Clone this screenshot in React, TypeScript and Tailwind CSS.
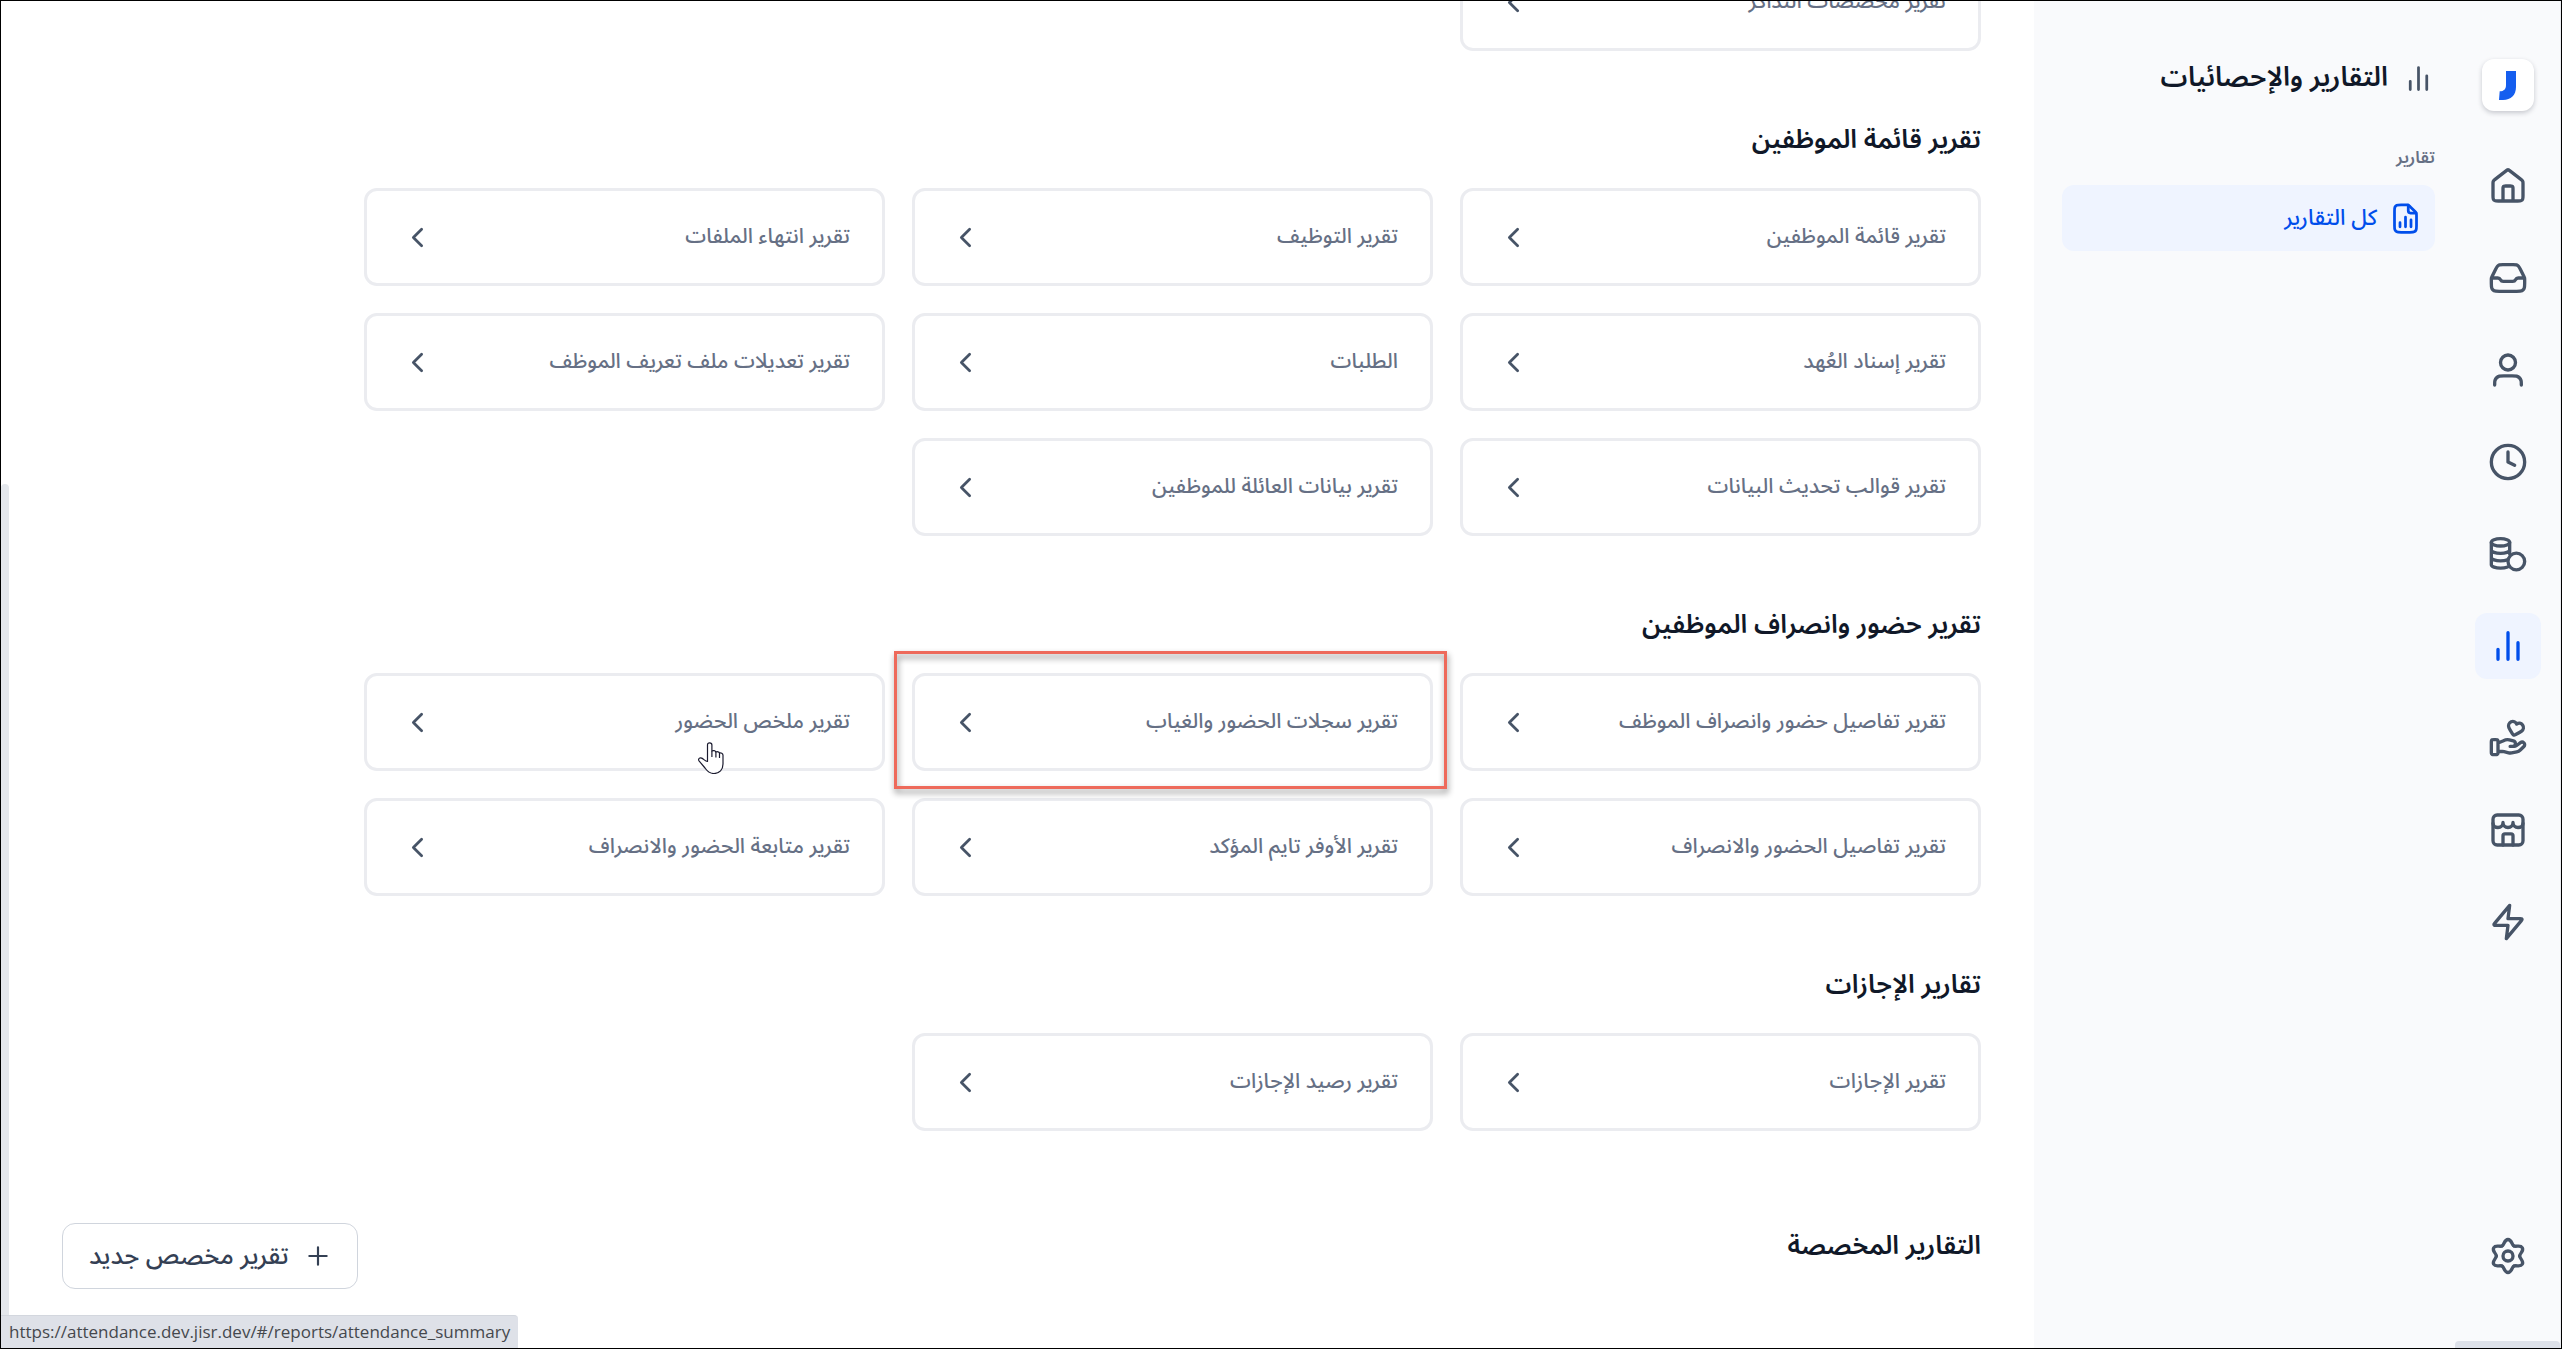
import type { ReactNode } from 'react';

interface IReport {
  title: string;
  href: string;
  highlighted?: boolean;
  hovered?: boolean;
}

interface IReportSection {
  title: string;
  reports: IReport[];
}

const sections: IReportSection[] = [
  {
    title: 'تقرير قائمة الموظفين',
    reports: [
      { title: 'تقرير قائمة الموظفين', href: '#/reports/employees' },
      { title: 'تقرير التوظيف', href: '#/reports/hiring' },
      { title: 'تقرير انتهاء الملفات', href: '#/reports/files_expiry' },
      { title: 'تقرير إسناد العُهد', href: '#/reports/assets' },
      { title: 'الطلبات', href: '#/reports/requests' },
      { title: 'تقرير تعديلات ملف تعريف الموظف', href: '#/reports/profile_changes' },
      { title: 'تقرير قوالب تحديث البيانات', href: '#/reports/data_templates' },
      { title: 'تقرير بيانات العائلة للموظفين', href: '#/reports/family' },
    ],
  },
  {
    title: 'تقرير حضور وانصراف الموظفين',
    reports: [
      { title: 'تقرير تفاصيل حضور وانصراف الموظف', href: '#/reports/employee_attendance' },
      { title: 'تقرير سجلات الحضور والغياب', href: '#/reports/attendance_logs', highlighted: true },
      { title: 'تقرير ملخص الحضور', href: '#/reports/attendance_summary', hovered: true },
      { title: 'تقرير تفاصيل الحضور والانصراف', href: '#/reports/attendance_details' },
      { title: 'تقرير الأوفر تايم المؤكد', href: '#/reports/overtime' },
      { title: 'تقرير متابعة الحضور والانصراف', href: '#/reports/attendance_tracking' },
    ],
  },
  {
    title: 'تقارير الإجازات',
    reports: [
      { title: 'تقرير الإجازات', href: '#/reports/leaves' },
      { title: 'تقرير رصيد الإجازات', href: '#/reports/leave_balance' },
    ],
  },
];

function Icon({ className, children }: { className: string; children: ReactNode }) {
  return (
    <svg
      viewBox="0 0 24 24"
      fill="none"
      stroke="currentColor"
      strokeWidth="2"
      strokeLinecap="round"
      strokeLinejoin="round"
      aria-hidden="true"
      className={`shrink-0 ${className}`}
    >
      {children}
    </svg>
  );
}

const chartPath = <path d="M18 20V10M12 20V4M6 20V14" />;

const navItems = [
  {
    label: 'الرئيسية',
    icon: (
      <path d="M9 21V13.6C9 13.0399 9 12.7599 9.10899 12.546C9.20487 12.3578 9.35785 12.2049 9.54601 12.109C9.75992 12 10.0399 12 10.6 12H13.4C13.9601 12 14.2401 12 14.454 12.109C14.6422 12.2049 14.7951 12.3578 14.891 12.546C15 12.7599 15 13.0399 15 13.6V21M11.0177 2.764L4.23539 8.03912C3.78202 8.39175 3.55534 8.56806 3.39203 8.78886C3.24737 8.98444 3.1396 9.20478 3.07403 9.43905C3 9.70352 3 9.9907 3 10.5651V17.8C3 18.9201 3 19.4801 3.21799 19.908C3.40973 20.2843 3.71569 20.5903 4.09202 20.782C4.51984 21 5.07989 21 6.2 21H17.8C18.9201 21 19.4802 21 19.908 20.782C20.2843 20.5903 20.5903 20.2843 20.782 19.908C21 19.4801 21 18.9201 21 17.8V10.5651C21 9.9907 21 9.70352 20.926 9.43905C20.8604 9.20478 20.7526 8.98444 20.608 8.78886C20.4447 8.56806 20.218 8.39175 19.7646 8.03913L12.9823 2.764C12.631 2.49075 12.4553 2.35412 12.2613 2.3016C12.0902 2.25526 11.9098 2.25526 11.7387 2.3016C11.5447 2.35412 11.369 2.49075 11.0177 2.764Z" />
    ),
  },
  {
    label: 'الوارد',
    icon: (
      <path d="M2.5 12H5.88197C6.56717 12 7.19357 12.3871 7.5 13C7.80643 13.6129 8.43283 14 9.11803 14H14.882C15.5672 14 16.1936 13.6129 16.5 13C16.8064 12.3871 17.4328 12 18.118 12H21.5M8.96656 4H15.0334C16.1103 4 16.6487 4 17.1241 4.16396C17.5445 4.30896 17.9274 4.5456 18.2451 4.85675C18.6043 5.2086 18.8451 5.6902 19.3267 6.65337L21.4932 10.9865C21.6822 11.3645 21.7767 11.5535 21.8434 11.7515C21.9026 11.9275 21.9453 12.1085 21.971 12.2923C22 12.4992 22 12.7105 22 13.1331V15.2C22 16.8802 22 17.7202 21.673 18.362C21.3854 18.9265 20.9265 19.3854 20.362 19.673C19.7202 20 18.8802 20 17.2 20H6.8C5.11984 20 4.27976 20 3.63803 19.673C3.07354 19.3854 2.6146 18.9265 2.32698 18.362C2 17.7202 2 16.8802 2 15.2V13.1331C2 12.7105 2 12.4992 2.02897 12.2923C2.05471 12.1085 2.09744 11.9275 2.15662 11.7515C2.22326 11.5535 2.31776 11.3645 2.50675 10.9865L4.67331 6.65337C5.1549 5.69018 5.3957 5.2086 5.75495 4.85675C6.07263 4.5456 6.45551 4.30896 6.87589 4.16396C7.35125 4 7.88969 4 8.96656 4Z" />
    ),
  },
  {
    label: 'الموظفون',
    icon: (
      <path d="M20 21C20 19.6044 20 18.9067 19.8278 18.3389C19.44 17.0605 18.4395 16.06 17.1611 15.6722C16.5933 15.5 15.8956 15.5 14.5 15.5H9.5C8.10444 15.5 7.40665 15.5 6.83886 15.6722C5.56045 16.06 4.56004 17.0605 4.17224 18.3389C4 18.9067 4 19.6044 4 21M16.5 7.5C16.5 9.98528 14.4853 12 12 12C9.51472 12 7.5 9.98528 7.5 7.5C7.5 5.01472 9.51472 3 12 3C14.4853 3 16.5 5.01472 16.5 7.5Z" />
    ),
  },
  {
    label: 'الحضور',
    icon: (
      <>
        <circle cx="12" cy="12" r="10" />
        <path d="M12 6V12L16 14" />
      </>
    ),
  },
  {
    label: 'الرواتب',
    icon: (
      <>
        <ellipse cx="7.5" cy="5" rx="5.5" ry="2.2" />
        <path d="M13 5v7M2 5v13.5c0 1.1 2.5 2 5.5 2 1.7 0 3.2-.3 4.3-.7M2 9.5c0 1.2 2.5 2.1 5.5 2.1s5.5-.9 5.5-2.1M2 14c0 1.2 2.5 2.1 5.5 2.1 1.6 0 3-.2 4.1-.6" />
        <circle cx="17" cy="16.5" r="5" />
      </>
    ),
  },
  { label: 'التقارير', icon: chartPath, active: true },
  {
    label: 'المزايا',
    icon: (
      <path d="M6 20.0872H8.61029C8.95063 20.0872 9.28888 20.1277 9.61881 20.2086L12.3769 20.8789C12.9753 21.0247 13.5988 21.0389 14.2035 20.9214L17.253 20.3281C18.0585 20.1712 18.7996 19.7854 19.3803 19.2205L21.5379 17.1217C22.154 16.5234 22.154 15.5524 21.5379 14.9531C20.9832 14.4134 20.1047 14.3527 19.4771 14.8103L16.9626 16.6449C16.6025 16.9081 16.1643 17.0498 15.7137 17.0498H13.2855H14.8311C15.7022 17.0498 16.4079 16.3633 16.4079 15.5159V15.2091C16.4079 14.5055 15.9156 13.892 15.2141 13.7219L12.8286 13.1417C12.4404 13.0476 12.0428 13 11.6431 13C10.6783 13 8.93189 13.7988 8.93189 13.7988L6 15.0249M2 14.6L2 20.4C2 20.9601 2 21.2401 2.10899 21.454C2.20487 21.6422 2.35785 21.7951 2.54601 21.891C2.75992 22 3.03995 22 3.6 22H4.4C4.96005 22 5.24008 22 5.45399 21.891C5.64215 21.7951 5.79513 21.6422 5.89101 21.454C6 21.2401 6 20.9601 6 20.4V14.6C6 14.0399 6 13.7599 5.89101 13.546C5.79513 13.3578 5.64215 13.2049 5.45399 13.109C5.24008 13 4.96005 13 4.4 13L3.6 13C3.03995 13 2.75992 13 2.54601 13.109C2.35785 13.2049 2.20487 13.3578 2.10899 13.546C2 13.7599 2 14.0399 2 14.6ZM17.1914 3.59946C16.5946 2.34333 15.2186 1.67784 13.8804 2.31636C12.5423 2.95488 11.9722 4.47361 12.5325 5.81047C12.8787 6.63669 13.8707 8.24103 14.5878 9.3564C14.8528 9.76852 14.9853 9.97457 15.1788 10.0951C15.3448 10.1985 15.5527 10.2542 15.7481 10.2476C15.976 10.24 16.1938 10.1279 16.6295 9.90364C17.8086 9.29665 19.4626 8.40036 20.1734 7.85639C21.3235 6.97622 21.6111 5.37142 20.7496 4.15002C19.8881 2.92862 18.4115 2.80919 17.1914 3.59946Z" />
    ),
  },
  {
    label: 'المتجر',
    icon: (
      <>
        <rect x="3" y="3" width="18" height="18" rx="2.5" />
        <path d="M3 8c0 1.5 1.3 2.5 3 2.5s3-1.3 3-3c0 1.7 1.3 3 3 3s3-1.3 3-3c0 1.7 1.3 3 3 3s3-1 3-2.5M9 21v-5.5c0-.8.4-1.2 1.2-1.2h3.6c.8 0 1.2.4 1.2 1.2V21" />
      </>
    ),
  },
  {
    label: 'الأتمتة',
    icon: (
      <path d="M13 2L4.09344 12.6879C3.74463 13.1064 3.57023 13.3157 3.56756 13.4925C3.56524 13.6461 3.63372 13.7923 3.75324 13.8889C3.89073 14 4.16316 14 4.70802 14H12L11 22L19.9065 11.3121C20.2553 10.8936 20.4297 10.6843 20.4324 10.5075C20.4347 10.3539 20.3663 10.2077 20.2467 10.1111C20.1092 10 19.8368 10 19.292 10H12L13 2Z" />
    ),
  },
];

function NavRail() {
  return (
    <aside className="relative flex w-[106px] shrink-0 flex-col items-center border-r border-[#eaecf0] bg-[#f9fafc] pt-[58px] pb-[59px]">
      <a
        href="#/"
        aria-label="Jisr"
        className="flex size-[52px] items-center justify-center rounded-xl bg-white shadow-[0_2px_5px_rgba(16,24,40,0.22)]"
      >
        <svg viewBox="0 0 17 29" className="h-[29px] w-[17px]" aria-hidden="true">
          <path fill="#155eef" d="M7 0H17V16C17 24 12 29 4 29H0L.7 20.3C5 20.3 7 18 7 14Z" />
        </svg>
      </a>
      <nav className="mt-[42px] flex flex-col gap-[26px]">
        {navItems.map((item) => (
          <a
            key={item.label}
            href="#/"
            aria-label={item.label}
            className={`flex size-[66px] items-center justify-center rounded-xl ${
              item.active ? 'bg-[#eff4ff] text-[#004eeb]' : 'text-[#475467]'
            }`}
          >
            <Icon className="size-10">{item.icon}</Icon>
          </a>
        ))}
      </nav>
      <a
        href="#/settings"
        aria-label="الإعدادات"
        className="mt-auto flex size-[66px] items-center justify-center text-[#475467]"
      >
        <Icon className="size-10">
          <circle cx="12" cy="12" r="3" />
          {[0, 60, 120, 180, 240, 300].map((angle) => (
            <path
              key={angle}
              d="M8.5 5.94C9.9 5.13 9.7 2.1 12 2.1S14.1 5.13 15.5 5.94"
              transform={`rotate(${angle} 12 12)`}
            />
          ))}
        </Icon>
      </a>
      <div className="absolute inset-x-0 bottom-0 h-[7px] rounded-t bg-[#dde1e9]" />
    </aside>
  );
}

function SidePanel() {
  return (
    <aside className="w-[421px] shrink-0 bg-[#f9fafc] pt-[53px] pr-5 pl-7">
      <div className="flex h-12 items-center gap-[14px]">
        <Icon className="size-[33px] text-[#475467]">{chartPath}</Icon>
        <h1 className="text-[27px] leading-[48px] font-semibold text-[#101828]">
          التقارير والإحصائيات
        </h1>
      </div>
      <p className="mt-10 text-[17px] leading-8 font-semibold text-[#667085]">تقارير</p>
      <a
        href="#/reports"
        className="mt-[11px] flex h-[66px] items-center gap-3 rounded-xl bg-[#eff4ff] px-[13px] text-[22px] leading-8 font-medium text-[#004eeb]"
      >
        <Icon className="size-[33px]">
          <path d="M20 9.99V17.2c0 1.68 0 2.52-.33 3.16a3 3 0 0 1-1.31 1.31C17.72 22 16.88 22 15.2 22H8.8c-1.68 0-2.52 0-3.16-.33a3 3 0 0 1-1.31-1.31C4 19.72 4 18.88 4 17.2V6.8c0-1.68 0-2.52.33-3.16a3 3 0 0 1 1.31-1.31C6.28 2 7.12 2 8.8 2h3.21c.73 0 1.1 0 1.45.08a3 3 0 0 1 .86.36c.3.19.56.45 1.08.96l3.2 3.2c.52.52.78.78.96 1.08a3 3 0 0 1 .36.86c.08.35.08.72.08 1.45Z" />
          <path d="M14 2.3V6.4c0 1.2.4 1.6 1.6 1.6h4.1M8 15v3M12 11v7M16 13v5" />
        </Icon>
        كل التقارير
      </a>
    </aside>
  );
}

function HandCursor() {
  return (
    <svg
      viewBox="0 0 26 32"
      aria-hidden="true"
      className="pointer-events-none absolute top-[66px] right-[158px] h-8 w-[26px]"
    >
      <path
        d="M9.5 18.5V3a2.2 2.2 0 0 1 4.4 0v6c1.2-.8 3.6-.4 4 1 1.2-.6 3.2-.2 3.6 1 1.4-.5 3.5.3 3.5 2.3V22c0 5.5-3.5 9.5-9 9.5-4.5 0-7-2.5-9-5.5L1 18.8c-1.2-2 .8-3.6 2.7-2.7 2 .9 3.5 3.4 5.8 3.4Z"
        fill="#fff"
        stroke="#1b1b2f"
        strokeWidth="1.2"
        strokeLinejoin="round"
      />
      <path d="M13.9 9v6M17.9 10v5.5M21.5 11v5" fill="none" stroke="#1b1b2f" strokeWidth="1.2" />
    </svg>
  );
}

function ReportCard({ report }: { report: IReport }) {
  return (
    <a
      href={report.href}
      className="relative flex h-[98px] items-center justify-between rounded-[13px] border-[3px] border-[#ebecf0] bg-white pr-8 pl-[34px] text-[21px] leading-8 font-medium text-[#667085]"
    >
      <span className="pb-0.5">{report.title}</span>
      <Icon className="size-[33px] text-[#475467]">
        <path d="M15 18L9 12L15 6" />
      </Icon>
      {report.highlighted && (
        <span className="pointer-events-none absolute -top-[25px] -right-[17px] -bottom-[21px] -left-[21px] z-10 border-[3px] border-[#ee6a5b] drop-shadow-[1px_4px_3px_rgba(0,0,0,0.45)]" />
      )}
      {report.hovered && <HandCursor />}
    </a>
  );
}

function SectionTitle({ children }: { children: ReactNode }) {
  return (
    <h2 className="mt-[65px] mb-6 text-[26px] leading-[48px] font-semibold text-[#101828]">
      {children}
    </h2>
  );
}

export default function App() {
  return (
    <div
      dir="rtl"
      className="relative flex h-screen overflow-hidden border border-black bg-white font-['Noto_Sans_Arabic','Noto_Sans',sans-serif]"
    >
      <NavRail />
      <SidePanel />

      <main className="min-w-0 flex-1 overflow-hidden pr-[53px] pl-[363px]">
        <div className="-mt-12 grid grid-cols-3 gap-[27px]">
          <ReportCard report={{ title: 'تقرير مخصصات التذاكر', href: '#/reports/tickets' }} />
        </div>
        {sections.map((section) => (
          <section key={section.title}>
            <SectionTitle>{section.title}</SectionTitle>
            <div className="grid grid-cols-3 gap-[27px]">
              {section.reports.map((report) => (
                <ReportCard key={report.title} report={report} />
              ))}
            </div>
          </section>
        ))}
        <div className="pt-[26px]">
          <SectionTitle>التقارير المخصصة</SectionTitle>
        </div>
      </main>

      <div className="absolute bottom-0 left-0 h-[864px] w-2 rounded-t bg-[#e4e7ec]" />

      <button
        type="button"
        className="absolute bottom-[59px] left-[61px] flex h-[66px] items-center gap-4 rounded-[13px] border border-[#d0d5dd] bg-white px-[26px] text-[25px] leading-10 font-medium text-[#344054]"
      >
        <Icon className="size-[26px]">
          <path d="M12 4V20M4 12H20" />
        </Icon>
        تقرير مخصص جديد
      </button>

      <div
        dir="ltr"
        className="absolute bottom-0 left-0 rounded-tr border-t border-[#d3d7de] bg-[#dee1e8] pr-2 pl-2 font-['Open_Sans',sans-serif] text-[17px] leading-8 text-[#45484d]"
      >
        https://attendance.dev.jisr.dev/#/reports/attendance_summary
      </div>
    </div>
  );
}
